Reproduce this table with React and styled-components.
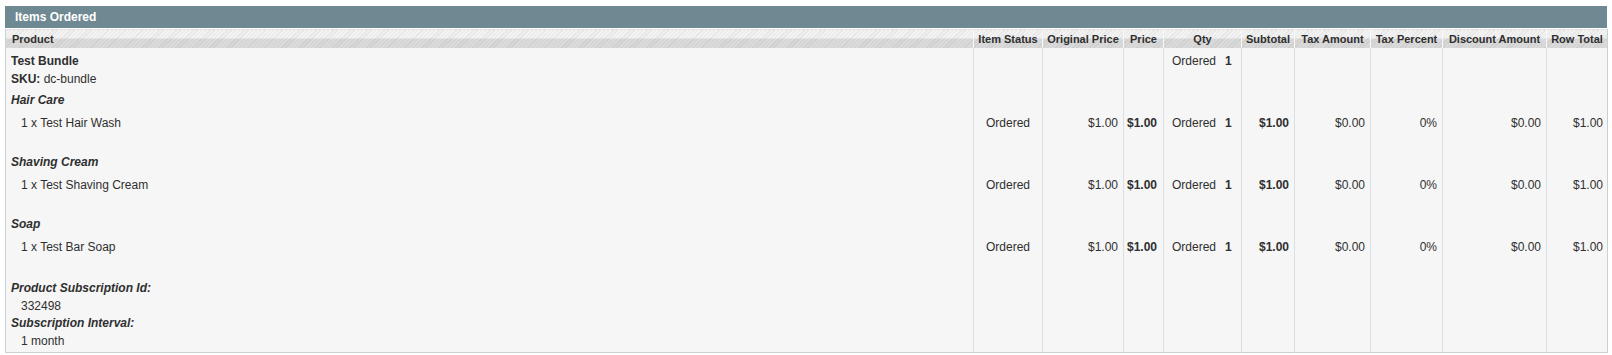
import React from "react";
import styled, { createGlobalStyle } from "styled-components";

const GlobalStyle = createGlobalStyle`
    html, body {
        margin: 0;
        padding: 0;
        background: #fff;
    }
    body {
        font-family: "Liberation Sans", Arial, sans-serif;
        font-size: 12px;
        color: #2f2f2f;
    }
`

const Page = styled.div`
    padding: 6px 5px 0 5px;
`
const Head = styled.div`
    height: 22px;
    line-height: 22px;
    padding: 0 10px;
    background-color: #6f8992;
    color: #fff;
    font-weight: bold;
    font-size: 12px;
`
const Grid = styled.table`
    width: 100%;
    table-layout: fixed;
    border-collapse: collapse;
    border: 1px solid #c9d1d3;
    border-top: 0;
    background-color: #f6f6f6;
`
const Th = styled.th`
    height: 19px;
    padding: 0 4px;
    border-top: 1px solid #fff;
    border-right: 1px solid #f8f8f8;
    font-size: 11px;
    font-weight: bold;
    color: #2f2f2f;
    text-align: ${(p) => (p.$left ? "left" : "center")};
    white-space: nowrap;
    background-image:
        repeating-linear-gradient(135deg, rgba(0,0,0,0.07) 0 1px, transparent 1px 3px),
        linear-gradient(#f4f4f4 0 45%, #dcdcdc 45% 100%);
    &:first-child {
        padding-left: 6px;
    }
    &:last-child {
        border-right: 0;
    }
`
const Td = styled.td`
    padding: ${(p) => p.$pad || "2px 5px"};
    border-right: 1px solid #dadfe0;
    vertical-align: top;
    line-height: 18px;
    text-align: ${(p) => p.$align || "left"};
    white-space: nowrap;
    &:last-child {
        border-right: 0;
    }
`
const Name = styled.div`
    font-weight: bold;
    line-height: 17.5px;
`
const Sku = styled.div`
    line-height: 17.5px;
    b {
        font-weight: bold;
    }
`
const OptionLabel = styled.div`
    font-weight: bold;
    font-style: italic;
`
const OptionValue = styled.div`
    padding-left: 10px;
`
const InfoLine = styled.div`
    line-height: 17.5px;
    font-weight: ${(p) => (p.$label ? "bold" : "normal")};
    font-style: ${(p) => (p.$label ? "italic" : "normal")};
    padding-left: ${(p) => (p.$label ? "0" : "10px")};
`
const QtyBox = styled.div`
    display: flex;
    gap: 9px;
    padding-left: 3px;
    line-height: ${(p) => p.$lh || "18px"};
    strong {
        font-weight: bold;
    }
`
const Strong = styled.span`
    font-weight: bold;
`

const widths = [968, 69, 81, 40, 78, 53, 76, 72, 104, 61];
const heads = ["Product", "Item Status", "Original Price", "Price", "Qty", "Subtotal", "Tax Amount", "Tax Percent", "Discount Amount", "Row Total"];

const options = [
    { label: "Hair Care", item: "Test Hair Wash" },
    { label: "Shaving Cream", item: "Test Shaving Cream" },
    { label: "Soap", item: "Test Bar Soap" },
];

const itemPad = "3px 5px 19px 5px";

const EmptyCells = ({ count }) =>
    Array.from({ length: count }).map((_, i) => <Td key={i} />);

const App = () => {
    return (
        <>
            <GlobalStyle />
            <Page>
                <Head>Items Ordered</Head>
                <Grid>
                    <colgroup>
                        {widths.map((w, i) => (
                            <col key={i} style={{ width: w }} />
                        ))}
                    </colgroup>
                    <thead>
                        <tr>
                            {heads.map((h, i) => (
                                <Th key={h} $left={i === 0}>{h}</Th>
                            ))}
                        </tr>
                    </thead>
                    <tbody>
                        <tr>
                            <Td $pad="5px 5px 1px 5px">
                                <Name>Test Bundle</Name>
                                <Sku><b>SKU:</b> dc-bundle</Sku>
                            </Td>
                            <EmptyCells count={3} />
                            <Td $pad="5px 5px 1px 5px">
                                <QtyBox $lh="17.5px">
                                    <span>Ordered</span>
                                    <strong>1</strong>
                                </QtyBox>
                            </Td>
                            <EmptyCells count={5} />
                        </tr>
                        {options.map((o) => (
                            <React.Fragment key={o.label}>
                                <tr>
                                    <Td><OptionLabel>{o.label}</OptionLabel></Td>
                                    <EmptyCells count={9} />
                                </tr>
                                <tr>
                                    <Td $pad={itemPad}><OptionValue>1 x {o.item}</OptionValue></Td>
                                    <Td $pad={itemPad} $align="center">Ordered</Td>
                                    <Td $pad={itemPad} $align="right">$1.00</Td>
                                    <Td $pad="3px 6px 19px 3px" $align="right"><Strong>$1.00</Strong></Td>
                                    <Td $pad={itemPad}>
                                        <QtyBox>
                                            <span>Ordered</span>
                                            <strong>1</strong>
                                        </QtyBox>
                                    </Td>
                                    <Td $pad={itemPad} $align="right"><Strong>$1.00</Strong></Td>
                                    <Td $pad={itemPad} $align="right">$0.00</Td>
                                    <Td $pad={itemPad} $align="right">0%</Td>
                                    <Td $pad={itemPad} $align="right">$0.00</Td>
                                    <Td $pad="3px 4px 19px 5px" $align="right">$1.00</Td>
                                </tr>
                            </React.Fragment>
                        ))}
                        <tr>
                            <Td $pad="5px 5px 2px 5px">
                                <InfoLine $label>Product Subscription Id:</InfoLine>
                                <InfoLine>332498</InfoLine>
                                <InfoLine $label>Subscription Interval:</InfoLine>
                                <InfoLine>1 month</InfoLine>
                            </Td>
                            <EmptyCells count={9} />
                        </tr>
                    </tbody>
                </Grid>
            </Page>
        </>
    )
}

export default App;
